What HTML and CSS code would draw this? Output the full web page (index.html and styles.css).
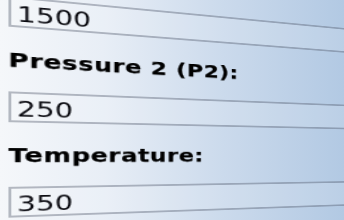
FILE: index.html
```html
<html>

<head>
    <meta charset="utf-8" />
    <link rel="stylesheet" href="styles.css">
</head>

<body>
    <div class="form">
        <input class="field" type="text" value="1500">
        <label class="caption">Pressure 2 (P2):</label>
        <input class="field" type="text" value="250">
        <label class="caption">Temperature:</label>
        <input class="field" type="text" value="350">
    </div>
</body>

</html>
```

FILE: styles.css
```css
html,
body {
    height: 100%;
    margin: 0;
    overflow: hidden;
}

body {
    background: linear-gradient(to right, #f5f7fa 0%, #e8eef6 30%, #cbdaec 65%, #b2c9e3 100%);
}

.form {
    width: 560px;
    margin-top: -5px;
    padding-left: 6px;
    transform-origin: 0 163px;
    transform: perspective(793px) rotateY(25deg) scaleX(1.56);
    filter: blur(0.5px);
}

.field {
    display: block;
    box-sizing: border-box;
    width: 100%;
    height: 31px;
    margin: 0;
    padding: 4px 0 0 4px;
    border: 2px solid rgba(40, 50, 70, 0.32);
    background: rgba(255, 255, 255, 0.12);
    font-family: "DejaVu Sans", Verdana, sans-serif;
    font-size: 22px;
    color: #0a0a10;
    outline: none;
}

.caption {
    display: block;
    margin: 21px 0 20px;
    font-family: "DejaVu Sans", Verdana, sans-serif;
    font-weight: bold;
    font-size: 20px;
    line-height: 24px;
    letter-spacing: 0.5px;
    color: #000;
    -webkit-text-stroke: 0.25px #000;
}
```
